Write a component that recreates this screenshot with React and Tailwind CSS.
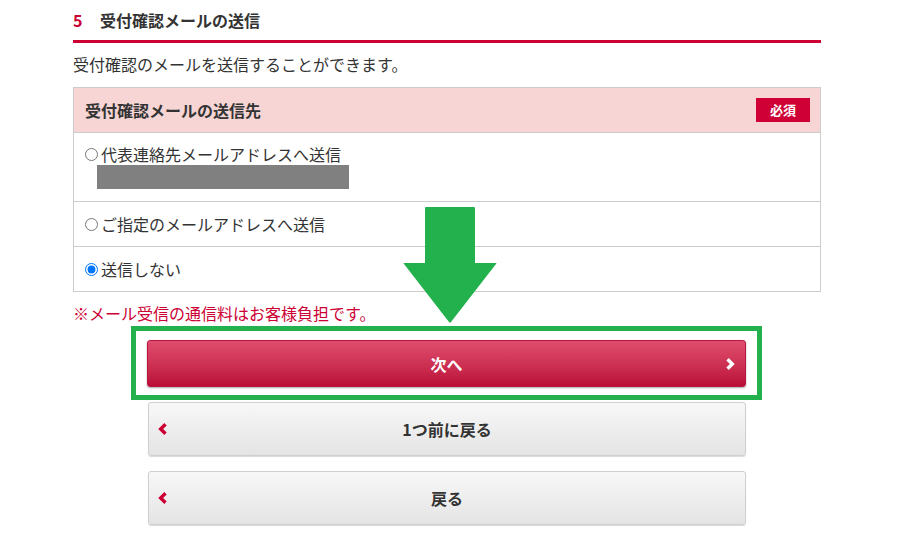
export default function App() {
  return (
    <div className="relative w-[914px] h-[543px] overflow-hidden bg-white text-[#333] font-['Noto_Sans_CJK_JP','Noto_Sans',sans-serif]">
      <div className="ml-[73px] w-[748px]">
        <div className="h-[40px] flex items-center border-b-[3px] border-[#cc0033] box-content">
          <span className="w-[27px] text-[16px] font-bold text-[#cc0033] leading-[24px]">5</span>
          <span className="text-[16px] font-bold leading-[24px]">受付確認メールの送信</span>
        </div>
        <p className="mt-[9px] text-[16px] leading-[24px]">受付確認のメールを送信することができます。</p>
        <div className="mt-[11px] border border-[#cccccc]">
          <div className="h-[44px] bg-[#f7d5d5] flex items-center justify-between pl-[11px] pr-[10px]">
            <span className="text-[16px] font-bold leading-[22px]">受付確認メールの送信先</span>
            <span className="w-[54px] h-[24px] bg-[#cf0036] text-white text-[13px] font-bold flex items-center justify-center">必須</span>
          </div>
          <div className="border-t border-[#cccccc] h-[69px] pl-[11px] pt-[10px]">
            <label className="flex items-center h-[22px] text-[16px] leading-[22px]">
              <input type="radio" name="dest" className="m-0 mr-[3px] w-[13px] h-[13px]" />
              <span>代表連絡先メールアドレスへ送信</span>
            </label>
            <div className="ml-[12px] w-[252px] h-[24px] bg-[#808080]"></div>
          </div>
          <div className="border-t border-[#cccccc] h-[45px] pl-[11px] flex items-center">
            <label className="flex items-center text-[16px] leading-[22px]">
              <input type="radio" name="dest" className="m-0 mr-[3px] w-[13px] h-[13px]" />
              <span>ご指定のメールアドレスへ送信</span>
            </label>
          </div>
          <div className="border-t border-[#cccccc] h-[45px] pl-[11px] flex items-center">
            <label className="flex items-center text-[16px] leading-[22px]">
              <input type="radio" name="dest" defaultChecked className="m-0 mr-[3px] w-[13px] h-[13px]" />
              <span>送信しない</span>
            </label>
          </div>
        </div>
        <p className="mt-[9px] text-[16px] leading-[24px] text-[#cc0033]">※メール受信の通信料はお客様負担です。</p>
      </div>

      <div className="mt-[1px] ml-[131px] w-[631px] border-[5px] border-[#23b14d] pt-[9px] pb-[8px] px-[11px]">
        <button className="relative w-[599px] h-[47px] rounded-[3px] bg-gradient-to-b from-[#e04c6e] to-[#bb0a39] border border-[#b9163f] shadow-[0_1px_2px_rgba(0,0,0,0.35)] flex items-center justify-center text-white text-[16px] font-bold">
          次へ
          <svg className="absolute right-[9px] top-1/2 -translate-y-1/2" width="11" height="13" viewBox="0 0 11 13">
            <path d="M2.5 1.8 L7.3 6.5 L2.5 11.2" fill="none" stroke="#ffffff" strokeWidth="3.4" />
          </svg>
        </button>
      </div>

      <div className="ml-[148px] w-[598px] mt-[2px] flex flex-col gap-[15px]">
        {["1つ前に戻る", "戻る"].map((t) => (
          <button key={t} className="relative w-full h-[54px] rounded-[3px] bg-gradient-to-b from-[#f8f8f8] to-[#e4e4e4] border border-[#cfcfcf] shadow-[0_1px_1px_rgba(0,0,0,0.15)] flex items-center justify-center text-[#333] text-[16px] font-bold">
            <svg className="absolute left-[8px] top-1/2 -translate-y-1/2" width="11" height="13" viewBox="0 0 11 13">
              <path d="M8.5 1.8 L3.7 6.5 L8.5 11.2" fill="none" stroke="#cc0033" strokeWidth="3.4" />
            </svg>
            {t}
          </button>
        ))}
      </div>

      <svg className="absolute left-[403px] top-[207px]" width="94" height="117" viewBox="0 0 94 117">
        <path d="M23 0 H71 Q72 0 72 1 V56 H93 Q94 56 93 57 L48 115 Q47 116 46 115 L1 57 Q0 56 1 56 H22 V1 Q22 0 23 0 Z" fill="#23b14d" />
      </svg>
    </div>
  );
}
